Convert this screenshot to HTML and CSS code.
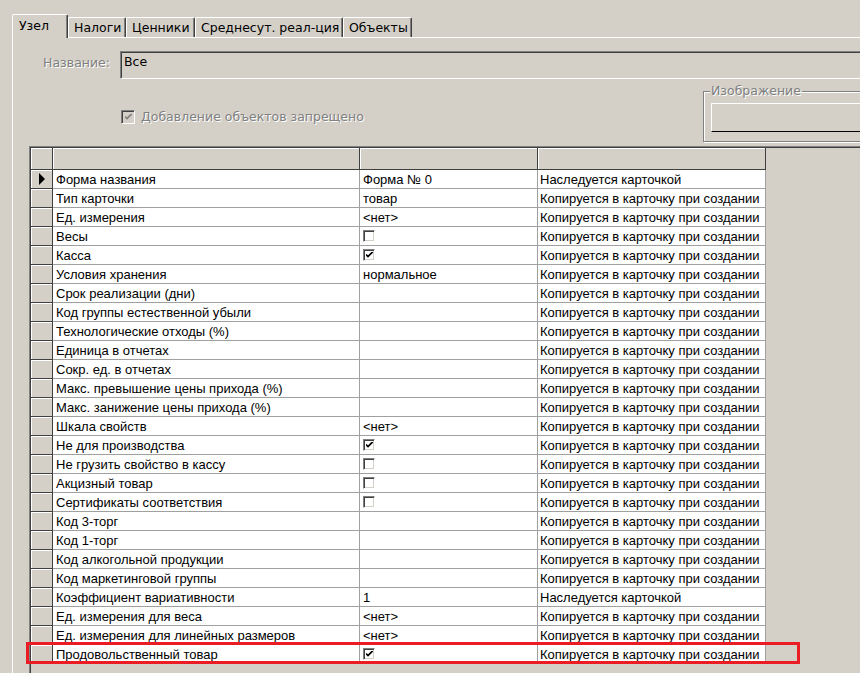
FILE: index.html
```html
<!DOCTYPE html>
<html>
	<head>
		<meta charset="UTF-8">
		<title>Узел</title>
		<link rel="stylesheet" href="styles.css">
	</head>
	<body>
		<div class="tabs">
			<div class="tab active" style="width:56px">Узел</div>
			<div class="tab" style="width:58px">Налоги</div>
			<div class="tab" style="width:69px">Ценники</div>
			<div class="tab" style="width:148px">Среднесут. реал-ция</div>
			<div class="tab" style="width:69px">Объекты</div>
		</div>

		<div class="panel">
			<div class="name-row">
				<label class="dis">Название:</label>
				<div class="name-input">Все</div>
			</div>

			<div class="opts-row">
				<div class="opt">
					<span class="chk chk-dis"><svg viewBox="0 0 7 7"><path d="M0 2.5 L2 4.5 L7 -0.5" /></svg></span>
					<span class="dis">Добавление объектов запрещено</span>
				</div>
				<fieldset class="group">
					<legend class="dis">Изображение</legend>
					<div class="image-box"></div>
				</fieldset>
			</div>

			<div class="grid">
				<div class="row head">
					<div class="cell c0"></div><div class="cell c1"></div><div class="cell c2"></div><div class="cell c3"></div>
				</div>
				<div class="row"><div class="cell c0"><span class="arrow"></span></div><div class="cell c1">Форма названия</div><div class="cell c2">Форма № 0</div><div class="cell c3">Наследуется карточкой</div></div>
				<div class="row"><div class="cell c0"></div><div class="cell c1">Тип карточки</div><div class="cell c2">товар</div><div class="cell c3">Копируется в карточку при создании</div></div>
				<div class="row"><div class="cell c0"></div><div class="cell c1">Ед. измерения</div><div class="cell c2">&lt;нет&gt;</div><div class="cell c3">Копируется в карточку при создании</div></div>
				<div class="row"><div class="cell c0"></div><div class="cell c1">Весы</div><div class="cell c2"><span class="chk"></span></div><div class="cell c3">Копируется в карточку при создании</div></div>
				<div class="row"><div class="cell c0"></div><div class="cell c1">Касса</div><div class="cell c2"><span class="chk"><svg viewBox="0 0 7 7"><path d="M0 2.5 L2 4.5 L7 -0.5" /></svg></span></div><div class="cell c3">Копируется в карточку при создании</div></div>
				<div class="row"><div class="cell c0"></div><div class="cell c1">Условия хранения</div><div class="cell c2">нормальное</div><div class="cell c3">Копируется в карточку при создании</div></div>
				<div class="row"><div class="cell c0"></div><div class="cell c1">Срок реализации (дни)</div><div class="cell c2"></div><div class="cell c3">Копируется в карточку при создании</div></div>
				<div class="row"><div class="cell c0"></div><div class="cell c1">Код группы естественной убыли</div><div class="cell c2"></div><div class="cell c3">Копируется в карточку при создании</div></div>
				<div class="row"><div class="cell c0"></div><div class="cell c1">Технологические отходы (%)</div><div class="cell c2"></div><div class="cell c3">Копируется в карточку при создании</div></div>
				<div class="row"><div class="cell c0"></div><div class="cell c1">Единица в отчетах</div><div class="cell c2"></div><div class="cell c3">Копируется в карточку при создании</div></div>
				<div class="row"><div class="cell c0"></div><div class="cell c1">Сокр. ед. в отчетах</div><div class="cell c2"></div><div class="cell c3">Копируется в карточку при создании</div></div>
				<div class="row"><div class="cell c0"></div><div class="cell c1">Макс. превышение цены прихода (%)</div><div class="cell c2"></div><div class="cell c3">Копируется в карточку при создании</div></div>
				<div class="row"><div class="cell c0"></div><div class="cell c1">Макс. занижение цены прихода (%)</div><div class="cell c2"></div><div class="cell c3">Копируется в карточку при создании</div></div>
				<div class="row"><div class="cell c0"></div><div class="cell c1">Шкала свойств</div><div class="cell c2">&lt;нет&gt;</div><div class="cell c3">Копируется в карточку при создании</div></div>
				<div class="row"><div class="cell c0"></div><div class="cell c1">Не для производства</div><div class="cell c2"><span class="chk"><svg viewBox="0 0 7 7"><path d="M0 2.5 L2 4.5 L7 -0.5" /></svg></span></div><div class="cell c3">Копируется в карточку при создании</div></div>
				<div class="row"><div class="cell c0"></div><div class="cell c1">Не грузить свойство в кассу</div><div class="cell c2"><span class="chk"></span></div><div class="cell c3">Копируется в карточку при создании</div></div>
				<div class="row"><div class="cell c0"></div><div class="cell c1">Акцизный товар</div><div class="cell c2"><span class="chk"></span></div><div class="cell c3">Копируется в карточку при создании</div></div>
				<div class="row"><div class="cell c0"></div><div class="cell c1">Сертификаты соответствия</div><div class="cell c2"><span class="chk"></span></div><div class="cell c3">Копируется в карточку при создании</div></div>
				<div class="row"><div class="cell c0"></div><div class="cell c1">Код 3-торг</div><div class="cell c2"></div><div class="cell c3">Копируется в карточку при создании</div></div>
				<div class="row"><div class="cell c0"></div><div class="cell c1">Код 1-торг</div><div class="cell c2"></div><div class="cell c3">Копируется в карточку при создании</div></div>
				<div class="row"><div class="cell c0"></div><div class="cell c1">Код алкогольной продукции</div><div class="cell c2"></div><div class="cell c3">Копируется в карточку при создании</div></div>
				<div class="row"><div class="cell c0"></div><div class="cell c1">Код маркетинговой группы</div><div class="cell c2"></div><div class="cell c3">Копируется в карточку при создании</div></div>
				<div class="row"><div class="cell c0"></div><div class="cell c1">Коэффициент вариативности</div><div class="cell c2">1</div><div class="cell c3">Наследуется карточкой</div></div>
				<div class="row"><div class="cell c0"></div><div class="cell c1">Ед. измерения для веса</div><div class="cell c2">&lt;нет&gt;</div><div class="cell c3">Копируется в карточку при создании</div></div>
				<div class="row"><div class="cell c0"></div><div class="cell c1">Ед. измерения для линейных размеров</div><div class="cell c2">&lt;нет&gt;</div><div class="cell c3">Копируется в карточку при создании</div></div>
				<div class="row"><div class="cell c0"></div><div class="cell c1">Продовольственный товар</div><div class="cell c2"><span class="chk"><svg viewBox="0 0 7 7"><path d="M0 2.5 L2 4.5 L7 -0.5" /></svg></span></div><div class="cell c3">Копируется в карточку при создании</div></div>
			</div>
		</div>

		<div class="highlight"></div>
	</body>
</html>
```

FILE: styles.css
```css
html, body{
	margin: 0;
	height: 100%;
}
body{
	position: relative;
	overflow: hidden;
	background-color: #d4d0c8;
	font-family: "DejaVu Sans", Verdana, sans-serif;
	font-size: 12.5px;
	color: #000;
}
.dis{
	color: #808080;
	text-shadow: 1px 1px 0 #fff;
}

/* tabs */
.tabs{
	display: flex;
	align-items: flex-end;
	padding: 13px 0 0 12px;
	height: 24px;
}
.tab{
	box-sizing: border-box;
	height: 20px;
	line-height: 19px;
	padding-left: 5px;
	border-top: 1px solid #fff;
	border-left: 1px solid #fff;
	border-right: 1px solid #404040;
	box-shadow: inset -1px 0 0 #808080;
	border-radius: 2px 2px 0 0;
	white-space: nowrap;
	overflow: hidden;
}
.tab.active{
	height: 24px;
	line-height: 21px;
	padding-left: 6px;
	margin-bottom: -1px;
	background-color: #d4d0c8;
	position: relative;
	z-index: 1;
}

/* panel */
.panel{
	margin-left: 12px;
	width: 900px;
	height: 700px;
	border-top: 1px solid #fff;
	border-left: 1px solid #fff;
}
.name-row{
	display: flex;
	margin-top: 13px;
}
.name-row label{
	width: 97px;
	margin: 5px 10px 0 0;
	text-align: right;
	line-height: 14px;
	white-space: nowrap;
}
.name-input{
	box-sizing: border-box;
	flex: 1;
	height: 28px;
	padding: 3px 0 0 3px;
	line-height: 14px;
	border-top: 1px solid #808080;
	border-left: 1px solid #808080;
	border-bottom: 1px solid #fff;
	box-shadow: inset 1px 1px 0 #404040;
}

.opts-row{
	display: grid;
	grid-template-columns: 690px 200px;
}
.opt{
	display: flex;
	align-items: center;
	gap: 6px;
	margin: 30px 0 0 108px;
	height: 15px;
	white-space: nowrap;
}

.chk{
	box-sizing: border-box;
	display: inline-flex;
	align-items: center;
	justify-content: center;
	width: 13px;
	height: 13px;
	background-color: #fff;
	border: 1px solid;
	border-color: #808080 #fff #fff #808080;
	box-shadow: inset 1px 1px 0 #404040, inset -1px -1px 0 #d4d0c8;
	vertical-align: top;
}
.chk svg{
	width: 7px;
	height: 7px;
	margin: 1px 0 0 1px;
	fill: none;
	stroke: #000;
	stroke-width: 1.7;
}
.chk-dis{
	width: 14px;
	height: 14px;
	background-color: #d4d0c8;
}
.chk-dis svg{
	stroke: #808080;
}

.group{
	margin: 5px 0 0 0;
	padding: 6px 7px 9px 7px;
	border: 1px solid #808080;
	box-shadow: inset 1px 1px 0 #fff, 1px 1px 0 #fff;
}
.group legend{
	padding: 0 1px;
	margin-left: -1px;
	line-height: 14px;
	background-color: #d4d0c8;
}
.image-box{
	height: 29px;
	box-sizing: border-box;
	border-top: 1px solid #fff;
	border-left: 1px solid #fff;
	border-bottom: 1px solid #000;
	margin-top: -1px;
}

/* data grid */
.grid{
	margin: 4px 0 0 16px;
	padding: 1px 0 0 1px;
	height: 600px;
	border-top: 1px solid #808080;
	border-left: 1px solid #808080;
	box-shadow: inset 1px 1px 0 #404040;
	font-family: "Liberation Sans", Arial, sans-serif;
	font-size: 13px;
}
.row{
	display: flex;
	height: 19px;
}
.cell{
	box-sizing: border-box;
	height: 19px;
	padding-left: 2px;
	line-height: 19px;
	white-space: nowrap;
	overflow: hidden;
	background-color: #fff;
	border-right: 1px solid #a0a0a0;
	border-bottom: 1px solid #a0a0a0;
}
.c0{ width: 22px; }
.c1{ width: 307px; padding-left: 3px; }
.c2{ width: 178px; padding-left: 3px; }
.c3{ width: 228px; }
.c2 .chk{
	margin-top: 3px;
	width: 12px;
	height: 12px;
}
.row .c0,
.head .cell{
	background-color: #d4d0c8;
	border-right-color: #404040;
	border-bottom-color: #404040;
	box-shadow: inset 1px 1px 0 #fff;
}
.head,
.head .cell{
	height: 22px;
}
.arrow{
	display: block;
	width: 0;
	height: 0;
	margin: 3px 0 0 6px;
	border-left: 6px solid #000;
	border-top: 6px solid transparent;
	border-bottom: 6px solid transparent;
}

.highlight{
	position: absolute;
	left: 26px;
	top: 642px;
	width: 774px;
	height: 22px;
	box-sizing: border-box;
	border: 3px solid #ec1c24;
}
```
